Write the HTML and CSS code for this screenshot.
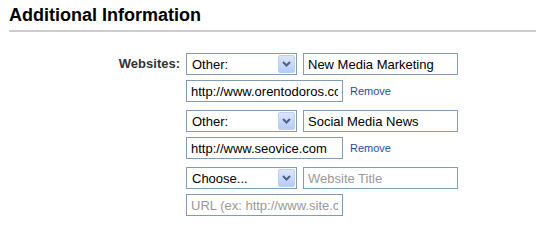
FILE: index.html
```html
<!DOCTYPE html>
<html lang="en">
<head>
    <meta charset="UTF-8">
    <title>Additional Information</title>
    <link rel="stylesheet" href="styles.css">
</head>
<body>
    <div class="section">
        <h2 class="section-title">Additional Information</h2>

        <div class="field-row">
            <div class="field-label">Websites:</div>
            <div class="site-list">
                <div class="site-entry">
                    <div class="line">
                        <div class="select-box">
                            <span class="select-text">Other:</span>
                            <span class="select-btn"><svg width="9" height="6" viewBox="0 0 9 6"><path d="M1 1 L4.5 4.5 L8 1" fill="none" stroke="#4d6185" stroke-width="2"/></svg></span>
                        </div>
                        <input class="text-input title-input" type="text" value="New Media Marketing">
                    </div>
                    <div class="line">
                        <input class="text-input url-input" type="text" value="http://www.orentodoros.com">
                        <a href="#" class="remove-link">Remove</a>
                    </div>
                </div>

                <div class="site-entry">
                    <div class="line">
                        <div class="select-box">
                            <span class="select-text">Other:</span>
                            <span class="select-btn"><svg width="9" height="6" viewBox="0 0 9 6"><path d="M1 1 L4.5 4.5 L8 1" fill="none" stroke="#4d6185" stroke-width="2"/></svg></span>
                        </div>
                        <input class="text-input title-input" type="text" value="Social Media News">
                    </div>
                    <div class="line">
                        <input class="text-input url-input" type="text" value="http://www.seovice.com">
                        <a href="#" class="remove-link">Remove</a>
                    </div>
                </div>

                <div class="site-entry">
                    <div class="line">
                        <div class="select-box">
                            <span class="select-text">Choose...</span>
                            <span class="select-btn"><svg width="9" height="6" viewBox="0 0 9 6"><path d="M1 1 L4.5 4.5 L8 1" fill="none" stroke="#4d6185" stroke-width="2"/></svg></span>
                        </div>
                        <input class="text-input title-input" type="text" placeholder="Website Title">
                    </div>
                    <div class="line">
                        <input class="text-input url-input" type="text" placeholder="URL (ex: http://www.site.com)">
                    </div>
                </div>
            </div>
        </div>
    </div>
</body>
</html>
```

FILE: styles.css
```css
* {
    box-sizing: border-box;
    margin: 0;
    padding: 0;
}

body {
    font-family: "Liberation Sans", Arial, sans-serif;
    background: white;
    color: #000;
}

.section {
    padding: 5px 0 0 9px;
}

.section-title {
    font-size: 18px;
    font-weight: bold;
    color: #000;
    line-height: 20px;
    padding-bottom: 5px;
    border-bottom: 2px solid #cccccc;
}

.field-row {
    display: flex;
    margin-top: 21px;
}

.field-label {
    width: 171px;
    text-align: right;
    font-weight: bold;
    font-size: 13px;
    color: #333;
    padding-top: 3px;
}

.site-list {
    margin-left: 6px;
    display: flex;
    flex-direction: column;
    gap: 8px;
}

.site-entry {
    display: flex;
    flex-direction: column;
    gap: 5px;
}

.line {
    display: flex;
    align-items: center;
    gap: 6px;
}

.select-box {
    width: 111px;
    height: 22px;
    border: 1px solid #7f9db9;
    display: flex;
    align-items: center;
    justify-content: space-between;
    padding: 1px;
    font-size: 13px;
}

.select-text {
    padding-left: 4px;
}

.select-btn {
    width: 17px;
    height: 18px;
    border: 1px solid #bccff5;
    border-radius: 2px;
    background: linear-gradient(#dbe6fd, #b7cbf7);
    display: flex;
    align-items: center;
    justify-content: center;
}

.text-input {
    height: 22px;
    border: 1px solid #7f9db9;
    font-family: "Liberation Sans", Arial, sans-serif;
    font-size: 13px;
    color: #000;
    padding: 0 4px;
    outline: none;
}

.text-input::placeholder {
    color: #999;
}

.title-input {
    width: 155px;
}

.url-input {
    width: 157px;
}

.remove-link {
    font-size: 11px;
    color: #1f4e99;
    text-decoration: none;
    margin-left: 1px;
}
```
